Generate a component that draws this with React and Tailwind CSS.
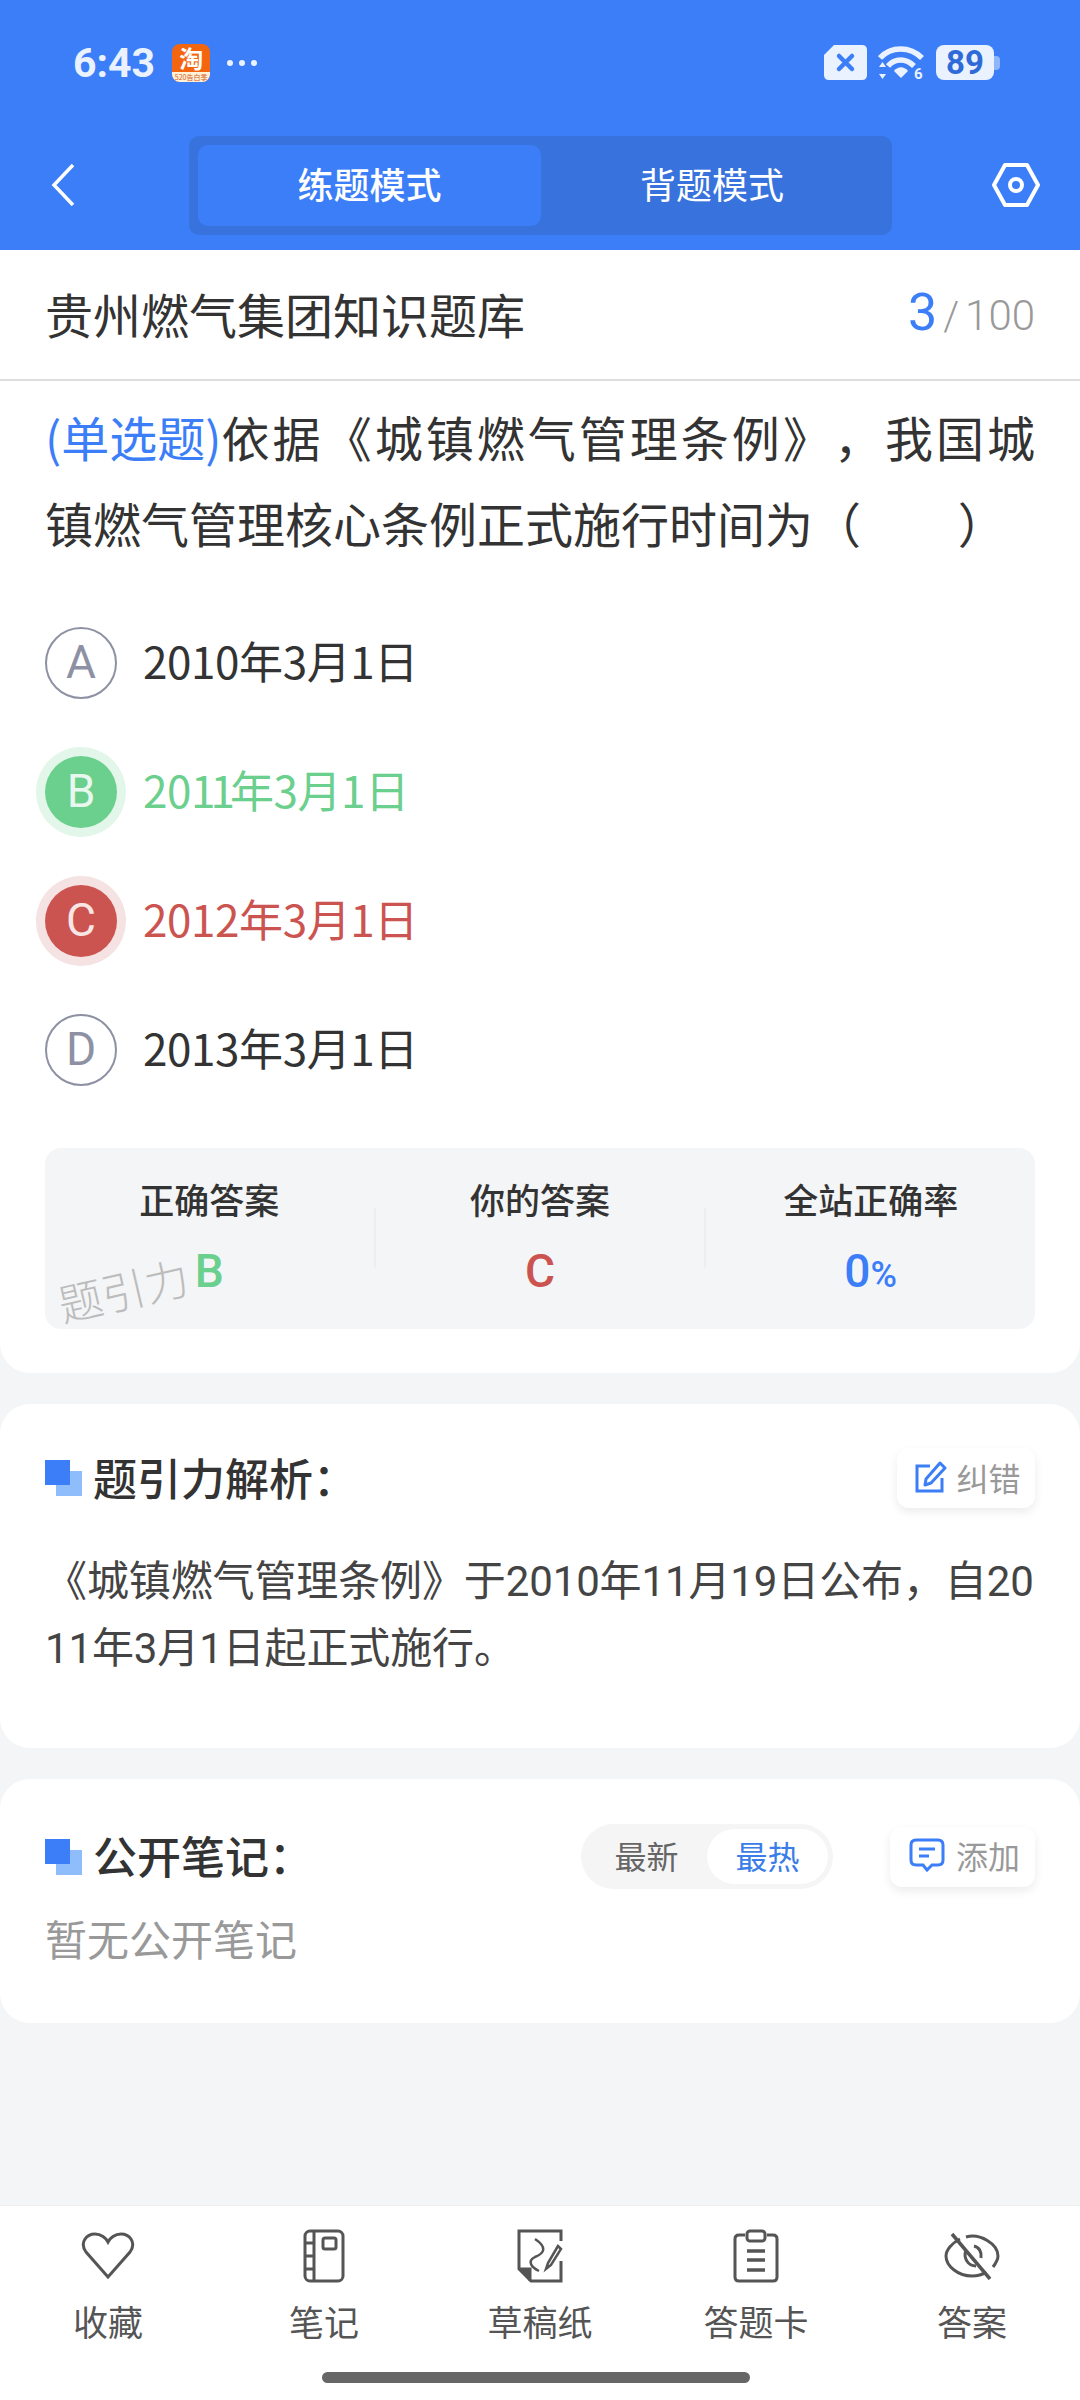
import React from "react";

const sans = { fontFamily: '"Noto Sans CJK SC", sans-serif' };

const SectionMark = () => (
  <div className="relative w-[37px] h-[36px] shrink-0">
    <div className="absolute left-[11px] top-[11px] w-[26px] h-[25px] bg-[#8fbdfb]" />
    <div className="absolute left-0 top-0 w-[25px] h-[25px] bg-[#3b7ef8]" />
  </div>
);

const WifiIcon = () => (
  <svg width="46" height="40" viewBox="0 0 46 40" fill="none">
    <path d="M2 13C13 1 32 1 44 13" stroke="#eaf2ff" strokeWidth="5.5" />
    <path d="M10 21C17 13 28 13 36 21" stroke="#eaf2ff" strokeWidth="5.5" />
    <path d="M16 26C20 21 26 21 30 26L23 33Z" fill="#eaf2ff" />
    <path d="M4 19H11L7.5 14ZM4 26H11L7.5 31Z" transform="translate(-3 3)" fill="#eaf2ff" />
    <text x="36" y="34" fontSize="15" fontWeight="700" fill="#eaf2ff" fontFamily="Roboto, sans-serif">6</text>
  </svg>
);

const Option = ({ letter, children, state }) => {
  const circle =
    state === "right"
      ? "bg-[#6bcf8d] text-[#e8f8ee] shadow-[0_0_0_9px_#e3f6ea]"
      : state === "wrong"
      ? "bg-[#cc5450] text-[#f8e6e5] shadow-[0_0_0_9px_#f5e2e2]"
      : "border-2 border-[#8e91a4] text-[#8e91a4]";
  const color =
    state === "right" ? "text-[#6bcf8d]" : state === "wrong" ? "text-[#cc5450]" : "text-[#333333]";
  return (
    <div className="h-[129px] flex items-center">
      <div className={`w-[72px] h-[72px] rounded-full flex items-center justify-center text-[46px] font-['Roboto'] ${circle}`}>
        {letter}
      </div>
      <span className={`ml-[26px] pb-[6px] text-[44px] tracking-[-0.4px] ${color}`}>{children}</span>
    </div>
  );
};

const Stat = ({ label, children }) => (
  <div className="flex-1 flex flex-col items-center pt-[30px]">
    <span className="text-[35px] leading-[42px] font-medium text-[#333333]">{label}</span>
    <div className="mt-[17px] h-[50px] flex items-baseline font-['Roboto'] font-medium text-[46px]">{children}</div>
  </div>
);

const NavItem = ({ icon, label }) => (
  <div className="flex-1 flex flex-col items-center">
    <div className="h-[56px] flex items-center justify-center">{icon}</div>
    <span className="mt-[15px] text-[35px] leading-[44px] text-[#555555]">{label}</span>
  </div>
);

const navStroke = { fill: "none", stroke: "#555555", strokeWidth: 3 };

export default function App() {
  return (
    <div className="w-[1080px] h-[2400px] flex flex-col bg-[#f4f5f7] overflow-hidden" style={sans}>
      {/* blue header */}
      <div className="h-[250px] bg-[#3b7ef8] shrink-0">
        <div className="h-[136px] flex items-start pt-[42px] pl-[73px]">
          <span className="text-[41px] leading-[42px] font-['Roboto'] font-bold text-[#eaf2ff]">6:43</span>
          <div className="ml-[17px] mt-[2px] w-[38px] h-[38px] rounded-[8px] bg-[#f4650f] flex flex-col items-center">
            <span className="h-[28px] text-[24px] leading-[28px] font-bold text-white">淘</span>
            <div className="w-full h-[10px] rounded-b-[8px] bg-[#fdf2d8] flex items-center justify-center text-[7px] leading-[10px] text-[#d9591a]">520告白季</div>
          </div>
          <div className="ml-[17px] mt-[18px] flex gap-[6px]">
            <div className="w-[6px] h-[6px] rounded-full bg-[#eaf2ff]" />
            <div className="w-[6px] h-[6px] rounded-full bg-[#eaf2ff]" />
            <div className="w-[6px] h-[6px] rounded-full bg-[#eaf2ff]" />
          </div>
          <div className="ml-auto mr-[80px] mt-[3px] flex items-start">
            <svg width="43" height="35" viewBox="0 0 43 35">
              <path d="M10 0H38Q43 0 43 5V30Q43 35 38 35H5Q0 35 0 30V10Z" fill="#eaf2ff" />
              <path d="M15 11L28 24M28 11L15 24" stroke="#3b7ef8" strokeWidth="4.5" strokeLinecap="round" />
            </svg>
            <div className="ml-[11px]"><WifiIcon /></div>
            <div className="ml-[12px] flex items-center">
              <div className="w-[58px] h-[35px] rounded-[8px] bg-[#eaf2ff] flex items-center justify-center text-[33px] leading-none font-['Roboto'] font-bold text-[#2f6bd8]">89</div>
              <div className="w-[6px] h-[14px] rounded-r-[4px] bg-[#8fb6fb]" />
            </div>
          </div>
        </div>
        <div className="flex items-start">
          <div className="w-[189px] pl-[51px] pt-[28px]">
            <svg width="24" height="42" viewBox="0 0 24 42" fill="none">
              <path d="M22 1L3 21L22 41" stroke="#ffffff" strokeWidth="3.5" />
            </svg>
          </div>
          <div className="w-[703px] h-[99px] rounded-[10px] bg-[#3873dd] p-[9px] flex text-[36px] font-medium text-white">
            <div className="w-[343px] pb-[5px] rounded-[10px] bg-[#3b7ef8] flex items-center justify-center">练题模式</div>
            <div className="flex-1 pb-[5px] flex items-center justify-center font-normal">背题模式</div>
          </div>
          <div className="ml-[100px] pt-[27px]">
            <svg width="48" height="44" viewBox="0 0 48 44" fill="none">
              <path d="M13 2H35L46 22L35 42H13L2 22Z" stroke="#ffffff" strokeWidth="4" strokeLinejoin="round" />
              <circle cx="24" cy="22" r="6" stroke="#ffffff" strokeWidth="4" />
            </svg>
          </div>
        </div>
      </div>

      <div className="flex-1 flex flex-col gap-[31px]">
        {/* question card */}
        <div className="bg-white rounded-b-[30px] pb-[44px]">
          <div className="h-[131px] pb-[3px] border-b-2 border-[#dddddd] flex items-center justify-between px-[45px]">
            <span className="text-[48px] text-[#333333]">贵州燃气集团知识题库</span>
            <div className="flex items-baseline font-['Roboto'] text-[#999999]">
              <span className="text-[52px] text-[#3b7ef8]">3</span>
              <span className="ml-[6px] text-[40px] font-light">/</span>
              <span className="ml-[6px] text-[42px] font-light">100</span>
            </div>
          </div>
          <div className="px-[45px] pt-[12px] pb-[3px] text-[48px] leading-[86px] text-[#333333] [text-spacing-trim:space-all]">
            <div className="[text-align-last:justify]">
              <span className="text-[#3b7ef8] tracking-[-3px]">(单选题)</span>依据《城镇燃气管理条例》，我国城
            </div>
            <div>镇燃气管理核心条例正式施行时间为（&nbsp;&nbsp;&nbsp;&nbsp;&nbsp;&nbsp;&nbsp;&nbsp;&nbsp;）</div>
          </div>
          <div className="px-[45px] mt-[30px]">
            <Option letter="A">2010年3月1日</Option>
            <Option letter="B" state="right">
              20<span className="tracking-[-5px]">11</span>年3月1日
            </Option>
            <Option letter="C" state="wrong">2012年3月1日</Option>
            <Option letter="D">2013年3月1日</Option>
          </div>
          <div className="relative mx-[45px] mt-[34px] h-[181px] rounded-[16px] bg-[#f4f5f7] flex">
            <Stat label="正确答案"><span className="text-[#6bcf8d]">B</span></Stat>
            <div className="w-[2px] h-[60px] mt-[60px] bg-[#eceef0]" />
            <Stat label="你的答案"><span className="text-[#cc5450]">C</span></Stat>
            <div className="w-[2px] h-[60px] mt-[60px] bg-[#eceef0]" />
            <Stat label="全站正确率">
              <span className="text-[#3b7ef8]">0</span>
              <span className="text-[#3b7ef8] text-[36px]">%</span>
            </Stat>
            <span className="absolute left-[12px] top-[116px] text-[44px] leading-[50px] text-[#bcbcbc] font-light -rotate-[13deg]">题引力</span>
          </div>
        </div>

        {/* analysis card */}
        <div className="bg-white rounded-[30px] px-[45px] pt-[44px] pb-[66px]">
          <div className="h-[60px] flex items-center">
            <SectionMark />
            <span className="ml-[11px] pb-[2px] text-[44px] font-medium text-[#333333]">题引力解析：</span>
            <div className="ml-auto w-[138px] h-[60px] pb-[2px] pl-[4px] rounded-[12px] bg-white shadow-[0_4px_10px_rgba(0,0,0,0.08)] flex items-center justify-center gap-[9px]">
              <svg width="32" height="32" viewBox="0 0 32 32" fill="none">
                <path d="M15 5H2V30H27V17" stroke="#3b7ef8" strokeWidth="3" />
                <path d="M11 18L25 2L30 7L16 22L10 24Z" stroke="#3b7ef8" strokeWidth="3" strokeLinejoin="round" />
              </svg>
              <span className="text-[32px] text-[#999999]">纠错</span>
            </div>
          </div>
          <p className="mt-[40px] text-[42px] leading-[67px] tracking-[-0.12px] text-[#444444] break-all font-['Roboto','Noto_Sans_CJK_SC',sans-serif]">
            《城镇燃气管理条例》于2010年11月19日公布，自2011年3月1日起正式施行。
          </p>
        </div>

        {/* notes card */}
        <div className="bg-white rounded-[30px] px-[45px] pt-[45px] pb-[52px]">
          <div className="h-[65px] flex items-center">
            <SectionMark />
            <span className="ml-[11px] pb-[3px] text-[44px] font-medium text-[#333333]">公开笔记：</span>
            <div className="ml-auto w-[252px] h-[65px] rounded-full bg-[#f5f5f5] flex items-center p-[5px] text-[32px]">
              <span className="w-[121px] pb-[4px] text-center text-[#666666]">最新</span>
              <span className="w-[121px] h-[55px] pb-[4px] rounded-full bg-white flex items-center justify-center text-[#3a7de8]">最热</span>
            </div>
            <div className="ml-[57px] w-[145px] h-[60px] pb-[3px] pl-[4px] rounded-[12px] bg-white shadow-[0_4px_10px_rgba(0,0,0,0.08)] flex items-center justify-center gap-[11px]">
              <svg width="36" height="34" viewBox="0 0 36 34" fill="none">
                <path d="M7 2H29Q34 2 34 7V22Q34 27 29 27H23L18 32L14 27H7Q2 27 2 22V7Q2 2 7 2Z" stroke="#3b7ef8" strokeWidth="3" />
                <path d="M10 11H26M10 18H20" stroke="#3b7ef8" strokeWidth="3" />
              </svg>
              <span className="text-[32px] text-[#999999]">添加</span>
            </div>
          </div>
          <p className="mt-[19px] pb-[3px] text-[42px] leading-[60px] text-[#999999]">暂无公开笔记</p>
        </div>
      </div>

      {/* bottom bar */}
      <div className="h-[195px] shrink-0 bg-white border-t border-[#eeeeee] pt-[22px] relative">
        <div className="flex">
          <NavItem
            label="收藏"
            icon={
              <svg width="54" height="48" viewBox="0 0 54 48" {...navStroke}>
                <path d="M27 45L5 20C-2 10 6 2 14 2C20 2 25 6 27 10C29 6 34 2 40 2C48 2 56 10 49 20Z" />
              </svg>
            }
          />
          <NavItem
            label="笔记"
            icon={
              <svg width="42" height="54" viewBox="0 0 42 54" {...navStroke}>
                <rect x="2" y="2" width="38" height="50" rx="5" />
                <path d="M11 2V52M2 14H11M2 27H11M2 40H11" />
                <rect x="20" y="9" width="13" height="11" rx="2" />
              </svg>
            }
          />
          <NavItem
            label="草稿纸"
            icon={
              <svg width="46" height="54" viewBox="0 0 46 54" {...navStroke}>
                <path d="M44 12V2H2V40L14 52H44V32" />
                <path d="M2 40H13V52" fill="#555555" />
                <path d="M18 10C30 18 28 24 18 28C10 32 14 38 22 42" strokeWidth="2.5" />
                <path d="M41 17L31 34L29 40L34 36L44 20Z" strokeWidth="2.5" />
              </svg>
            }
          />
          <NavItem
            label="答题卡"
            icon={
              <svg width="46" height="54" viewBox="0 0 46 54" {...navStroke}>
                <path d="M12 6H6Q2 6 2 10V48Q2 52 6 52H40Q44 52 44 48V10Q44 6 40 6H34" />
                <rect x="14" y="2" width="18" height="10" rx="3" />
                <path d="M14 22H32M14 31H32M14 41H32" strokeWidth="3.5" />
              </svg>
            }
          />
          <NavItem
            label="答案"
            icon={
              <svg width="56" height="48" viewBox="0 0 56 48" {...navStroke}>
                <path d="M16 7C8 11 2 18 2 24C2 34 14 44 28 44C33 44 38 43 42 40" />
                <path d="M22 5C36 1 54 12 54 24C54 28 52 31 49 35" />
                <path d="M22 18C19 26 24 34 32 34M30 14C35 15 38 20 37 26" />
                <path d="M8 2L46 47" strokeWidth="3.5" />
              </svg>
            }
          />
        </div>
        <div className="absolute left-[322px] bottom-[17px] w-[428px] h-[11px] rounded-full bg-[#666666]" />
      </div>
    </div>
  );
}
